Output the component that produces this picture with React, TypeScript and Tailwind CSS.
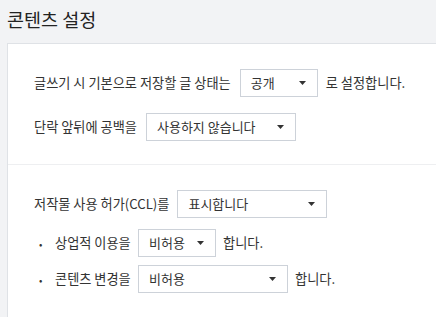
import React from "react";

const font = { fontFamily: '"Noto Sans CJK KR", "Noto Sans", sans-serif' };

function Select({ label, width }: { label: string; width: string }) {
  return (
    <div
      className={`flex items-center justify-between h-[28px] border border-[#cdd2d9] bg-white pl-[10px] pr-[11px] text-[13px] text-[#333] ${width}`}
    >
      <span>{label}</span>
      <svg width="7" height="4" viewBox="0 0 7 4" className="shrink-0">
        <path d="M0 0 H7 L3.5 4 Z" fill="#333" />
      </svg>
    </div>
  );
}

export default function App() {
  return (
    <div className="min-h-[317px] bg-[#f2f3f5] text-[#333]" style={font}>
      <h1 className="pl-[7px] pt-[6px] h-[43px] text-[18.5px] leading-[26px] text-[#222]">콘텐츠 설정</h1>

      <div className="ml-[7px] border-t border-l border-[#dfe2e6] bg-white">
        {/* 기본 글 상태 */}
        <div className="pl-[26px] pt-[25px] pb-[23px] flex flex-col gap-[16px] text-[13.2px]">
          <div className="flex items-center gap-[8px]">
            <span className="mr-[1px]">글쓰기 시 기본으로 저장할 글 상태는</span>
            <Select label="공개" width="w-[78px]" />
            <span>로 설정합니다.</span>
          </div>
          <div className="flex items-center gap-[8px]">
            <span className="mr-[1px]">단락 앞뒤에 공백을</span>
            <Select label="사용하지 않습니다" width="w-[150px]" />
          </div>
        </div>

        <div className="h-px bg-[#eeeff1]" />

        {/* CCL */}
        <div className="pl-[26px] pt-[25px] pb-[24px] flex flex-col text-[13.2px]">
          <div className="flex items-center gap-[8px]">
            <span>저작물 사용 허가(CCL)를</span>
            <Select label="표시합니다" width="w-[150px]" />
          </div>
          <div className="flex items-center gap-[7px] mt-[11px] pl-[5px]">
            <span className="w-[9px] text-[10px]">•</span>
            <span className="w-[76px]">상업적 이용을</span>
            <Select label="비허용" width="w-[78px]" />
            <span>합니다.</span>
          </div>
          <div className="flex items-center gap-[7px] mt-[8px] pl-[5px]">
            <span className="w-[9px] text-[10px]">•</span>
            <span className="w-[76px]">콘텐츠 변경을</span>
            <Select label="비허용" width="w-[150px]" />
            <span>합니다.</span>
          </div>
        </div>
      </div>
    </div>
  );
}
